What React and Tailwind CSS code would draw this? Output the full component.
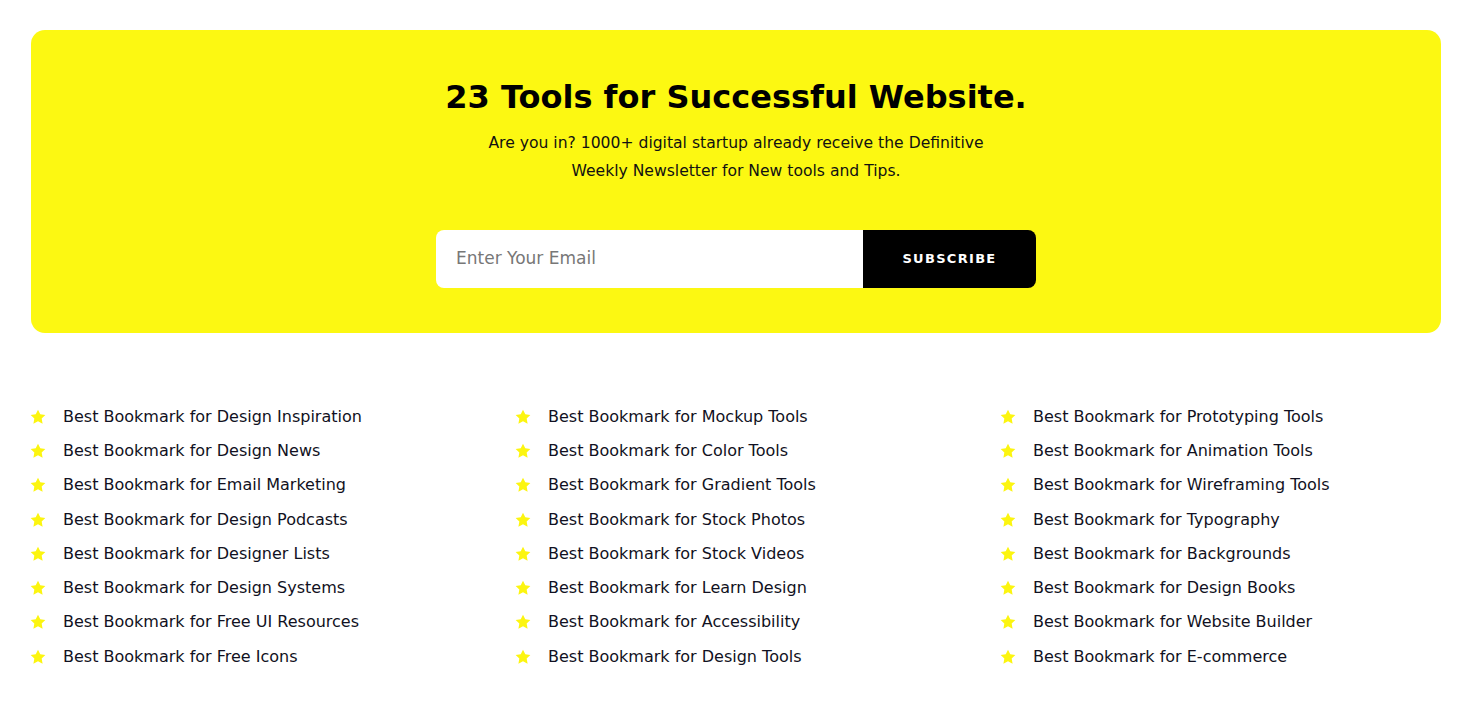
const col1 = [
  'Best Bookmark for Design Inspiration',
  'Best Bookmark for Design News',
  'Best Bookmark for Email Marketing',
  'Best Bookmark for Design Podcasts',
  'Best Bookmark for Designer Lists',
  'Best Bookmark for Design Systems',
  'Best Bookmark for Free UI Resources',
  'Best Bookmark for Free Icons',
];
const col2 = [
  'Best Bookmark for Mockup Tools',
  'Best Bookmark for Color Tools',
  'Best Bookmark for Gradient Tools',
  'Best Bookmark for Stock Photos',
  'Best Bookmark for Stock Videos',
  'Best Bookmark for Learn Design',
  'Best Bookmark for Accessibility',
  'Best Bookmark for Design Tools',
];
const col3 = [
  'Best Bookmark for Prototyping Tools',
  'Best Bookmark for Animation Tools',
  'Best Bookmark for Wireframing Tools',
  'Best Bookmark for Typography',
  'Best Bookmark for Backgrounds',
  'Best Bookmark for Design Books',
  'Best Bookmark for Website Builder',
  'Best Bookmark for E-commerce',
];

function Star() {
  return (
    <svg viewBox="0 0 24 24" className="w-[16px] h-[16px] shrink-0 -ml-[1px]" fill="#fcf510">
      <path d="M12 1l3.4 7 7.6 1-5.5 5.3 1.4 7.7L12 18.3 5.1 22l1.4-7.7L1 9l7.6-1z" />
    </svg>
  );
}

function Column({ items }) {
  return (
    <ul className="flex flex-col gap-[11px]">
      {items.map((t) => (
        <li key={t} className="flex items-center h-[23.3px]">
          <Star />
          <span className="ml-[17px] text-[16px] text-[#111122]">{t}</span>
        </li>
      ))}
    </ul>
  );
}

export default function App() {
  return (
    <div className="min-h-screen bg-white pt-[30px] px-[31px]" style={{ fontFamily: '"DejaVu Sans", "Open Sans", sans-serif' }}>
      <div className="w-[1410px] bg-[#fcf812] rounded-[14px] h-[303px] flex flex-col items-center pt-[44px]">
        <h1 className="text-[32px] font-bold leading-[46px] text-black">23 Tools for Successful Website.</h1>
        <p className="mt-[9px] text-[15.6px] leading-[28px] text-[#111] text-center w-[540px]">
          Are you in? 1000+ digital startup already receive the Definitive Weekly Newsletter for New tools and Tips.
        </p>
        <div className="mt-[45px] flex w-[600px] h-[58px]">
          <div className="flex-1 bg-white rounded-l-[8px] flex items-center pl-[20px] text-[17px] text-[#777]">
            Enter Your Email
          </div>
          <button className="w-[173px] bg-black text-white rounded-r-[8px] text-[13px] font-bold tracking-[1.3px]">
            SUBSCRIBE
          </button>
        </div>
      </div>
      <div className="grid grid-cols-[485px_485px_1fr] mt-[72px]">
        <Column items={col1} />
        <Column items={col2} />
        <Column items={col3} />
      </div>
    </div>
  );
}
